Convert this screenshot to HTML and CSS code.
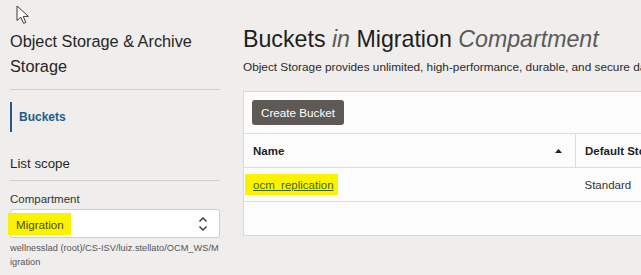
FILE: index.html
```html
<!DOCTYPE html>
<html lang="en">
<head>
  <meta charset="UTF-8">
  <title>Buckets</title>
  <link rel="stylesheet" href="styles.css">
</head>
<body>
  <svg class="cursor" width="14" height="20" viewBox="0 0 14 20">
    <path d="M1 1 L1 15.5 L4.8 12.2 L7.6 18.4 L9.8 17.4 L7.2 11.4 L12.4 11.4 Z" fill="#fff" stroke="#3a3a3a" stroke-width="1" stroke-linejoin="round"/>
  </svg>

  <aside class="sidebar">
    <h2 class="side-title">Object Storage &amp; Archive Storage</h2>

    <nav class="side-nav">
      <a class="nav-item active">Buckets</a>
    </nav>

    <h3 class="scope-title">List scope</h3>

    <label class="field-label">Compartment</label>
    <div class="select">
      <span class="hl">Migration</span>
      <svg class="select-arrows" width="10" height="16" viewBox="0 0 10 16">
        <path d="M1.5 5.5 L5 2 L8.5 5.5 M1.5 10.5 L5 14 L8.5 10.5" fill="none" stroke="#333" stroke-width="1.4"/>
      </svg>
    </div>
    <p class="path">wellnesslad (root)/CS-ISV/luiz.stellato/OCM_WS/Migration</p>
  </aside>

  <main class="content">
    <h1 class="page-title">Buckets <em>in</em> Migration <em>Compartment</em></h1>
    <p class="desc">Object Storage provides unlimited, high-performance, durable, and secure data storage. Data is uploaded as objects that are stored in buckets.</p>

    <div class="card">
      <div class="toolbar">
        <button class="btn">Create Bucket</button>
      </div>

      <table class="grid">
        <thead>
          <tr>
            <th class="col-name">
              <div class="th-inner">
                <span>Name</span>
                <svg class="sort" width="7" height="4" viewBox="0 0 7 4"><path d="M0 4 L3.5 0 L7 4 Z" fill="#222"/></svg>
              </div>
            </th>
            <th class="col-tier">Default Storage Tier</th>
          </tr>
        </thead>
        <tbody>
          <tr>
            <td><a class="link hl-link">ocm_replication</a></td>
            <td>Standard</td>
          </tr>
        </tbody>
      </table>
      <div class="grid-empty"></div>
    </div>
  </main>
</body>
</html>
```

FILE: styles.css
```css
body {
  margin: 0;
  height: 275px;
  overflow: hidden;
  background-color: #efeeec;
  font-family: "Liberation Sans", Arial, sans-serif;
  color: #1e1e1e;
  display: flex;
  position: relative;
}

.cursor {
  position: absolute;
  left: 16px;
  top: 5px;
}

/* sidebar */

.sidebar {
  width: 210px;
  flex-shrink: 0;
  padding-left: 10px;
  padding-top: 29px;
}

.side-title {
  margin: 0;
  font-size: 16.3px;
  font-weight: normal;
  line-height: 25px;
  color: #262626;
  padding-bottom: 10px;
  border-bottom: 1px solid #cfcecc;
}

.side-nav {
  margin-top: 12px;
}

.nav-item {
  display: block;
  height: 30px;
  line-height: 30px;
  padding-left: 7px;
  border-left: 2px solid #1f5c8b;
  font-size: 12px;
  font-weight: bold;
  color: #1f5c8b;
}

.scope-title {
  margin: 22px 0 0;
  font-size: 13.3px;
  font-weight: normal;
  line-height: 20px;
  color: #262626;
  padding-bottom: 6px;
  border-bottom: 1px solid #cfcecc;
}

.field-label {
  display: block;
  margin-top: 10px;
  font-size: 11.5px;
  line-height: 16px;
  color: #333;
}

.select {
  margin-top: 2px;
  height: 27px;
  border: 1px solid #cfcecc;
  border-radius: 3px;
  background-color: #fff;
  display: flex;
  align-items: center;
  justify-content: space-between;
  padding-right: 11px;
}

.select .hl {
  margin-left: -3px;
  padding: 5px 7px 4px 8px;
  background-color: #fbf200;
  color: #4b4c0a;
  font-size: 11.6px;
  line-height: 13px;
}

.path {
  margin: 3px 0 0;
  font-size: 9.25px;
  line-height: 14px;
  color: #555;
  word-break: break-all;
}

/* main */

.content {
  margin-left: 23px;
  flex-grow: 1;
  min-width: 0;
  padding-top: 24px;
}

.page-title {
  margin: 0;
  font-size: 23.2px;
  font-weight: normal;
  line-height: 30px;
  color: #1e1e1e;
  white-space: nowrap;
}

.page-title em {
  color: #5a5a5a;
}

.desc {
  margin: 5px 0 0;
  font-size: 11.8px;
  line-height: 16px;
  color: #2a2a2a;
  white-space: nowrap;
  overflow: hidden;
}

.card {
  margin-top: 16px;
  width: 520px;
  background-color: #fcfcfc;
  border: 1px solid #d8d8d6;
}

.toolbar {
  padding: 8px 8px 8px;
}

.btn {
  width: 92px;
  height: 25px;
  border: none;
  border-radius: 3px;
  background-color: #5e5954;
  color: #fff;
  font-family: inherit;
  font-size: 11.7px;
  padding: 0;
  cursor: pointer;
}

.grid {
  width: 100%;
  border-collapse: collapse;
  table-layout: fixed;
  font-size: 11.5px;
}

.grid th,
.grid td {
  height: 33px;
  padding: 0 0 0 9px;
  text-align: left;
  border-top: 1px solid #dcdcda;
  white-space: nowrap;
  overflow: hidden;
}

.grid th {
  font-weight: bold;
  color: #1e1e1e;
}

.grid td {
  color: #333;
}

.col-name {
  width: 322px;
  border-right: 1px solid #dcdcda;
}

.th-inner {
  display: flex;
  align-items: center;
  justify-content: space-between;
  padding-right: 13px;
}

.sort {
  margin-top: 1px;
}

.link {
  color: #1f5c8b;
  text-decoration: underline;
}

.hl-link {
  display: inline-block;
  margin-left: -8px;
  padding: 5px 4px 4px 8px;
  background-color: #fbf200;
  color: #3f6a12;
}

.grid-empty {
  height: 33px;
  border-top: 1px solid #dcdcda;
}
```
